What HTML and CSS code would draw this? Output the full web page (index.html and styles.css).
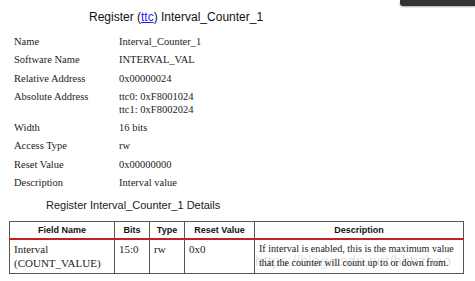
FILE: index.html
```html
<!DOCTYPE html>
<html>
<head>
<meta charset="utf-8">
<link rel="stylesheet" href="styles.css">
</head>
<body>
<div class="page">
  <div class="topbar"></div>
  <h1 class="title">Register (<a href="#">ttc</a>) Interval_Counter_1</h1>
  <dl class="props">
    <dt>Name</dt><dd>Interval_Counter_1</dd>
    <dt>Software Name</dt><dd>INTERVAL_VAL</dd>
    <dt>Relative Address</dt><dd>0x00000024</dd>
    <dt>Absolute Address</dt><dd>ttc0: 0xF8001024<br>ttc1: 0xF8002024</dd>
    <dt>Width</dt><dd>16 bits</dd>
    <dt>Access Type</dt><dd>rw</dd>
    <dt>Reset Value</dt><dd>0x00000000</dd>
    <dt>Description</dt><dd>Interval value</dd>
  </dl>
  <h2 class="caption">Register Interval_Counter_1 Details</h2>
  <div class="table-wrap">
    <table class="fields">
      <thead>
        <tr>
          <th class="c-name">Field Name</th>
          <th class="c-bits">Bits</th>
          <th class="c-type">Type</th>
          <th class="c-reset">Reset Value</th>
          <th class="c-desc">Description</th>
        </tr>
      </thead>
      <tbody>
        <tr>
          <td>Interval<br>(COUNT_VALUE)</td>
          <td>15:0</td>
          <td>rw</td>
          <td>0x0</td>
          <td class="desc">If interval is enabled, this is the maximum value<br>that the counter will count up to or down from.</td>
        </tr>
      </tbody>
    </table>
    <div class="watermark">https://blog.csdn.net/hhhzhao</div>
  </div>
</div>
</body>
</html>
```
FILE: styles.css
```css
html, body {
  margin: 0;
  padding: 0;
  background: #fff;
}
.page {
  position: relative;
  width: 475px;
  height: 281px;
  overflow: hidden;
  font-family: "Liberation Serif", serif;
  color: #222;
}
.topbar {
  position: absolute;
  top: 0;
  right: 0;
  width: 75px;
  height: 6px;
  background: #333;
  border-bottom-left-radius: 3px;
  box-shadow: 0 1px 2px rgba(0,0,0,0.35);
}
.title {
  margin: 0;
  padding: 9px 0 0 89px;
  font-family: "Liberation Sans", Arial, sans-serif;
  font-weight: normal;
  font-size: 12px;
  line-height: 16px;
  color: #111;
}
.title a {
  color: #1a1aff;
  text-decoration: underline;
}
.props {
  display: grid;
  grid-template-columns: 105px auto;
  row-gap: 5.25px;
  margin: 10px 0 0 14px;
  font-size: 10.5px;
  line-height: 13px;
}
.props dt, .props dd {
  margin: 0;
}
.caption {
  margin: 9px 0 0 0;
  padding-left: 46px;
  font-family: "Liberation Sans", Arial, sans-serif;
  font-weight: normal;
  font-size: 11px;
  line-height: 14px;
  color: #222;
}
.table-wrap {
  position: relative;
  margin: 9px 0 0 9px;
  width: 455px;
}
.fields {
  border-collapse: collapse;
  width: 455px;
  table-layout: fixed;
}
.fields th, .fields td {
  box-sizing: border-box;
  border: 1px solid #555;
  padding: 0 4px;
  vertical-align: top;
}
.fields th {
  font-family: "Liberation Sans", Arial, sans-serif;
  font-weight: bold;
  font-size: 9px;
  line-height: 16px;
  text-align: center;
  border-bottom: 2px solid #c0202a;
  color: #111;
}
.fields td {
  font-size: 11px;
  line-height: 14px;
  padding-top: 2px;
  padding-bottom: 3px;
  text-align: left;
}
.fields td.desc {
  white-space: nowrap;
  font-size: 10.1px;
}
.c-name { width: 105px; }
.c-bits { width: 35px; }
.c-type { width: 35px; }
.c-reset { width: 70px; }
.watermark {
  position: absolute;
  left: 246px;
  top: 31px;
  font-family: "Liberation Sans", Arial, sans-serif;
  font-size: 15px;
  color: rgba(0,0,0,0.14);
  white-space: nowrap;
  pointer-events: none;
}
```
